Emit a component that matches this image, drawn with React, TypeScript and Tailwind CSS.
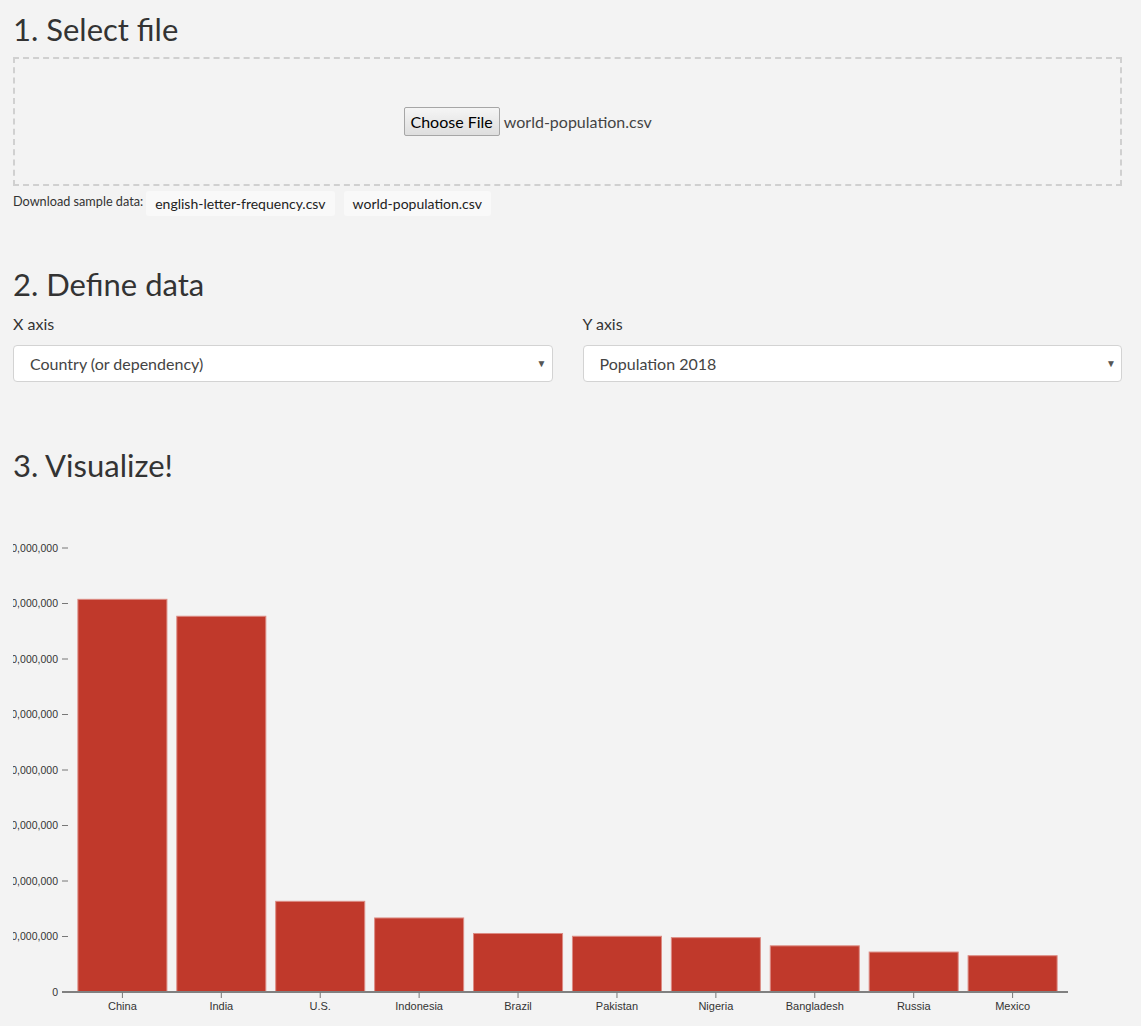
const data = [
  { name: 'China', value: 1415045928 },
  { name: 'India', value: 1354051854 },
  { name: 'U.S.', value: 326766748 },
  { name: 'Indonesia', value: 266794980 },
  { name: 'Brazil', value: 210867954 },
  { name: 'Pakistan', value: 200813818 },
  { name: 'Nigeria', value: 195875237 },
  { name: 'Bangladesh', value: 166368149 },
  { name: 'Russia', value: 143964709 },
  { name: 'Mexico', value: 130759074 },
]

// chart coordinates (svg origin sits at page x=13, y=500)
const X0 = 55
const X1 = 1054
const Y0 = 491
const PER_TICK = 55.5
const step = (X1 - X0) / (data.length - 0.1 + 0.2)
const barW = step * 0.9
const yScale = (v: number) => Y0 - (v / 200000000) * PER_TICK

const ticks = [0, 1, 2, 3, 4, 5, 6, 7, 8]

function fmt(n: number) {
  return n.toLocaleString('en-US')
}

function BarChart() {
  return (
    <svg width={1109} height={526} className="block" style={{ fontFamily: '"Liberation Sans", Arial, sans-serif' }}>
      {/* y axis */}
      {ticks.map((i) => {
        const y = Y0 - i * PER_TICK
        return (
          <g key={i}>
            <line x1={49} x2={55} y1={y} y2={y} stroke="#777" strokeWidth={1} />
            <text x={45} y={y + 3.5} fontSize={10.5} fill="#333" textAnchor="end">
              {fmt(i * 200000000)}
            </text>
          </g>
        )
      })}

      {/* bars */}
      {data.map((d, i) => {
        const x = X0 + step * 0.1 + i * step
        const y = yScale(d.value)
        return (
          <rect
            key={d.name}
            x={x}
            y={y}
            width={barW}
            height={Y0 - y}
            fill="#c0392b"
            stroke="#dc8c84"
            strokeWidth={1}
          />
        )
      })}

      {/* x axis */}
      <line x1={49} x2={X1 + 1} y1={Y0} y2={Y0} stroke="#808080" strokeWidth={2} />
      {data.map((d, i) => {
        const cx = X0 + step * 0.1 + i * step + barW / 2
        return (
          <g key={d.name}>
            <line x1={cx} x2={cx} y1={Y0} y2={Y0 + 6} stroke="#777" strokeWidth={1} />
            <text x={cx} y={Y0 + 17.5} fontSize={11} fill="#333" textAnchor="middle">
              {d.name}
            </text>
          </g>
        )
      })}
    </svg>
  )
}

function Select({ value }: { value: string }) {
  return (
    <div className="relative flex h-[37px] items-center rounded-[4px] border border-[#d3d3d3] bg-white pl-[16px] text-[16px] text-[#444]">
      {value}
      <span className="absolute right-[5px] top-[10px] text-[10px] text-[#555]">▼</span>
    </div>
  )
}

export default function App() {
  return (
    <div
      className="min-h-[1026px] bg-[#f3f3f3] pl-[13px] pr-[19px] pt-[9px] text-[#333]"
      style={{ fontFamily: 'Lato, "Open Sans", sans-serif' }}
    >
      {/* 1. Select file */}
      <h1 className="text-[31px] leading-[40px] text-[#333]">1. Select file</h1>
      <div className="mt-[8px] flex h-[129px] items-center justify-center border-2 border-dashed border-[#d0d0d0]">
        <div className="-ml-[2px] flex w-[326px] items-center">
          <span className="flex h-[29px] items-center rounded-[2px] border border-[#a6a6a6] bg-gradient-to-b from-[#f5f5f5] to-[#dedede] px-[6px] text-[16px] text-black">
            Choose File
          </span>
          <span className="ml-[4px] text-[16px] text-[#444]">world-population.csv</span>
        </div>
      </div>
      <div className="mt-[5px] flex items-center">
        <span className="-mt-[3px] text-[12.7px] text-[#333]">Download sample data:</span>
        <span className="ml-[3px] flex h-[25px] items-center rounded-[3px] bg-[#f9f9f9] px-[9px] text-[14px] text-[#222]">
          english-letter-frequency.csv
        </span>
        <span className="ml-[9px] flex h-[25px] items-center rounded-[3px] bg-[#f9f9f9] px-[9px] text-[14px] text-[#222]">
          world-population.csv
        </span>
      </div>

      {/* 2. Define data */}
      <h1 className="mt-[48px] text-[31px] leading-[40px] text-[#333]">2. Define data</h1>
      <div className="mt-[10px] grid grid-cols-2 gap-[30px]">
        <div>
          <div className="text-[16px] leading-[20px] text-[#333]">X axis</div>
          <div className="mt-[11px]">
            <Select value="Country (or dependency)" />
          </div>
        </div>
        <div>
          <div className="text-[16px] leading-[20px] text-[#333]">Y axis</div>
          <div className="mt-[11px]">
            <Select value="Population 2018" />
          </div>
        </div>
      </div>

      {/* 3. Visualize! */}
      <h1 className="mt-[63px] text-[31px] leading-[40px] text-[#333]">3. Visualize!</h1>
      <div className="mt-[16px]">
        <BarChart />
      </div>
    </div>
  )
}
